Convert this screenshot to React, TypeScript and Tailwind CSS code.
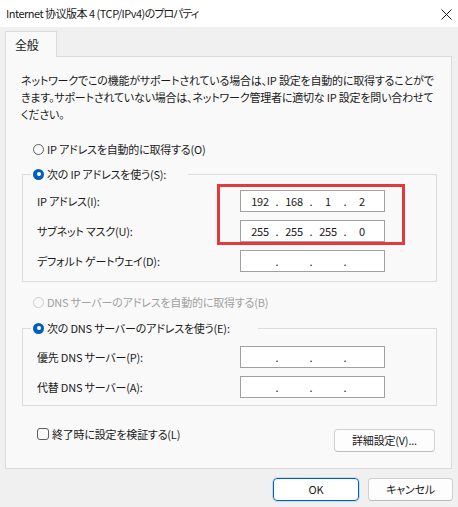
import React from "react";

const FONT = "font-['Noto_Sans_CJK_JP','Noto_Sans',sans-serif] [font-feature-settings:'palt']";

function Radio({ checked, disabled }: { checked?: boolean; disabled?: boolean }) {
  if (checked) {
    return (
      <span className="flex h-[11px] w-[11px] shrink-0 items-center justify-center rounded-full bg-[#005fb8]">
        <span className="h-[4px] w-[4px] rounded-full bg-white" />
      </span>
    );
  }
  return (
    <span
      className={
        disabled
          ? "h-[11px] w-[11px] shrink-0 rounded-full border border-[#cdcdcd] bg-[#f9f9f9]"
          : "h-[11px] w-[11px] shrink-0 rounded-full border border-[#5f5f5f] bg-[#f9f9f9]"
      }
    />
  );
}

function IpBox({ parts }: { parts: string[] }) {
  return (
    <div className="flex h-[22px] w-[145px] items-center border border-[#a0a0a0] bg-white pl-[5px] leading-none text-[#1a1a1a]">
      {parts.map((p, i) => (
        <React.Fragment key={i}>
          {i > 0 && <span className="w-[6px] text-center">.</span>}
          <span className="w-[28px] text-center">{p}</span>
        </React.Fragment>
      ))}
    </div>
  );
}

function Field({ label, parts }: { label: string; parts: string[] }) {
  return (
    <div className="flex h-[22px] items-center">
      <span className="w-[203px] whitespace-nowrap">{label}</span>
      <IpBox parts={parts} />
    </div>
  );
}

const EMPTY = ["", "", "", ""];

export default function App() {
  return (
    <div className={`relative h-[507px] w-[458px] overflow-hidden bg-[#f0f0f0] text-[11px] tracking-[-0.2px] text-[#1a1a1a] ${FONT}`}>
      {/* title bar */}
      <div className="flex h-[27px] items-center justify-between bg-white pl-[6px] pr-[6px]">
        <span className="whitespace-nowrap tracking-[-0.5px]">
          Internet 协议版本 4 (TCP/IPv4)<span className="tracking-[-1px]">のプロパティ</span>
        </span>
        <svg width="11" height="11" viewBox="0 0 11 11" className="mt-[1px]">
          <path d="M0.5 0.5 L10.5 10.5 M10.5 0.5 L0.5 10.5" stroke="#1a1a1a" strokeWidth="1" />
        </svg>
      </div>

      {/* tab */}
      <div className="ml-[5px] mt-[4px] flex">
        <div className="relative z-10 -mb-px flex h-[26px] w-[52px] items-center border border-b-0 border-[#dadada] bg-[#f9f9f9] pl-[9px] text-[12px]">
          全般
        </div>
      </div>

      {/* panel */}
      <div className="ml-[5px] w-[447px] border border-[#dadada] bg-[#f9f9f9] pb-[16px] pl-[16px] pr-[14px] pt-[15px]">
        <p className="-ml-px whitespace-nowrap leading-[17px]">
          ネットワークでこの機能がサポートされている場合は、IP 設定を自動的に取得することがで
          <br />
          きます。サポートされていない場合は、ネットワーク管理者に適切な IP 設定を問い合わせて
          <br />
          ください。
        </p>

        <label className="ml-[11px] mt-[18px] flex h-[16px] items-center gap-[3px] whitespace-nowrap">
          <Radio />
          <span>IP アドレスを自動的に取得する(O)</span>
        </label>

        <fieldset className="mt-[9px] border border-[#dcdcdc]">
          <legend className="ml-[8px] flex h-[16px] w-[157px] items-center gap-[3px] whitespace-nowrap pl-[2px]">
            <Radio checked />
            <span>次の IP アドレスを使う(S):</span>
          </legend>
          <div className="flex flex-col gap-[8px] pb-[9px] pl-[14px] pt-[8px]">
            <Field label="IP アドレス(I):" parts={["192", "168", "1", "2"]} />
            <Field label="サブネット マスク(U):" parts={["255", "255", "255", "0"]} />
            <Field label="デフォルト ゲートウェイ(D):" parts={EMPTY} />
          </div>
        </fieldset>

        <label className="ml-[11px] mt-[12px] flex h-[16px] items-center gap-[3px] whitespace-nowrap text-[#a0a0a0]">
          <Radio disabled />
          <span>DNS サーバーのアドレスを自動的に取得する(B)</span>
        </label>

        <fieldset className="mt-[10px] border border-[#dcdcdc]">
          <legend className="ml-[8px] flex h-[16px] w-[227px] items-center gap-[3px] whitespace-nowrap pl-[2px]">
            <Radio checked />
            <span>次の DNS サーバーのアドレスを使う(E):</span>
          </legend>
          <div className="flex flex-col gap-[8px] pb-[7px] pl-[14px] pt-[10px]">
            <Field label="優先 DNS サーバー(P):" parts={EMPTY} />
            <Field label="代替 DNS サーバー(A):" parts={EMPTY} />
          </div>
        </fieldset>

        <div className="mt-[21px] flex items-start justify-between pr-[2px]">
          <label className="ml-[15px] flex h-[14px] items-center gap-[3px] whitespace-nowrap">
            <span className="h-[12px] w-[12px] rounded-[3px] border border-[#5f5f5f] bg-[#f9f9f9]" />
            <span>終了時に設定を検証する(L)</span>
          </label>
          <button className="mt-[2px] flex h-[23px] w-[101px] items-center justify-center rounded-[4px] border border-[#d0d0d0] border-b-[#bcbcbc] bg-[#fdfdfd]">
            詳細設定(V)...
          </button>
        </div>
      </div>

      {/* bottom buttons */}
      <div className="mt-[9px] flex justify-end gap-[9px] pr-[5px]">
        <button className="flex h-[23px] w-[86px] items-center justify-center rounded-[4px] border border-[#005fb8] bg-white outline outline-1 outline-[#c6dbf0]">
          OK
        </button>
        <button className="flex h-[23px] w-[85px] items-center justify-center rounded-[4px] border border-[#d0d0d0] border-b-[#bcbcbc] bg-[#fdfdfd]">
          キャンセル
        </button>
      </div>

      {/* red annotation box */}
      <div className="absolute left-[217px] top-[184px] h-[61px] w-[188px] border-[3px] border-[#e5383d]" />
    </div>
  );
}
